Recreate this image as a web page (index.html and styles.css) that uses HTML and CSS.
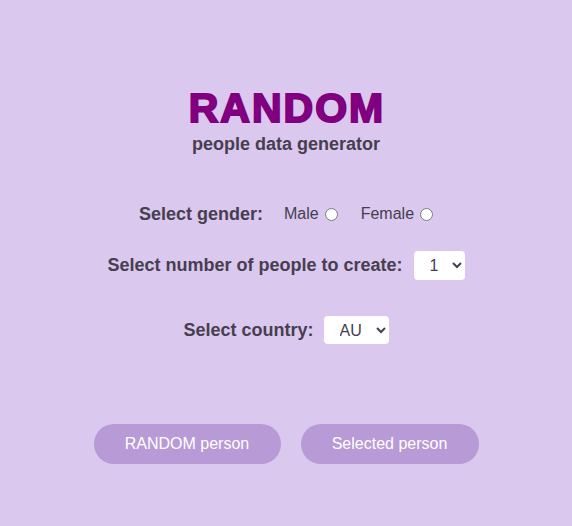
FILE: index.html
```html
<!DOCTYPE html>
<html>
<head>
<meta charset="utf-8">
<link rel="stylesheet" href="styles.css">
</head>
<body>
<main class="app">
  <header class="head">
    <h1 class="title">RANDOM</h1>
    <p class="subtitle">people data generator</p>
  </header>
  <section class="form">
    <div class="row row-gender">
      <span class="label">Select gender:</span>
      <div class="opts">
        <label class="opt">Male<input type="radio" name="g" class="radio"></label>
        <label class="opt">Female<input type="radio" name="g" class="radio"></label>
      </div>
    </div>
    <div class="row row-num">
      <span class="label">Select number of people to create:</span>
      <select class="sel sel-num"><option>1</option><option>2</option></select>
    </div>
    <div class="row row-country">
      <span class="label">Select country:</span>
      <select class="sel sel-country"><option>AU</option><option>US</option></select>
    </div>
  </section>
  <div class="buttons">
    <button class="btn btn-random">RANDOM person</button>
    <button class="btn btn-selected">Selected person</button>
  </div>
</main>
</body>
</html>
```
FILE: styles.css
```css
html, body {
  margin: 0;
  padding: 0;
  background: #dac8ee;
}
body {
  font-family: "Liberation Sans", Arial, sans-serif;
  color: #473e50;
}
.app {
  display: flex;
  flex-direction: column;
  align-items: center;
  padding-top: 86px;
}
.head {
  display: flex;
  flex-direction: column;
  align-items: center;
}
.title {
  margin: 0;
  padding-left: 2px;
  font-size: 41px;
  line-height: 44px;
  font-weight: bold;
  letter-spacing: 2px;
  color: #800080;
  -webkit-text-stroke: 2px #800080;
}
.subtitle {
  margin: 3px 0 0;
  font-size: 18px;
  line-height: 22px;
  font-weight: bold;
}
.form {
  margin-top: 44px;
  display: flex;
  flex-direction: column;
  align-items: center;
}
.row {
  display: flex;
  align-items: center;
}
.label {
  font-size: 18px;
  font-weight: bold;
}
.row-gender {
  height: 30px;
  gap: 21px;
}
.opts {
  display: flex;
  align-items: center;
  gap: 23px;
}
.opt {
  font-size: 16px;
  display: flex;
  align-items: center;
  gap: 6px;
}
.radio {
  margin: 1px 0 0 0;
  width: 13px;
  height: 13px;
}
.row-num {
  margin-top: 22px;
  gap: 11px;
}
.row-country {
  margin-top: 36px;
  gap: 10px;
}
.sel {
  appearance: auto;
  background: #fff;
  border: none;
  border-radius: 4px;
  font-family: "Liberation Sans", Arial, sans-serif;
  font-size: 16px;
  color: #473e50;
  height: 29px;
  padding: 0 6px 0 12px;
}
.sel-num { width: 51px; }
.sel-country { width: 65px; height: 28px; }
.buttons {
  margin-top: 80px;
  display: flex;
  gap: 20px;
}
.btn {
  height: 40px;
  border: none;
  border-radius: 20px;
  background: #b79ad6;
  color: #fff;
  font-family: "Liberation Sans", Arial, sans-serif;
  font-size: 16px;
}
.btn-random { width: 187px; }
.btn-selected { width: 178px; }
```
